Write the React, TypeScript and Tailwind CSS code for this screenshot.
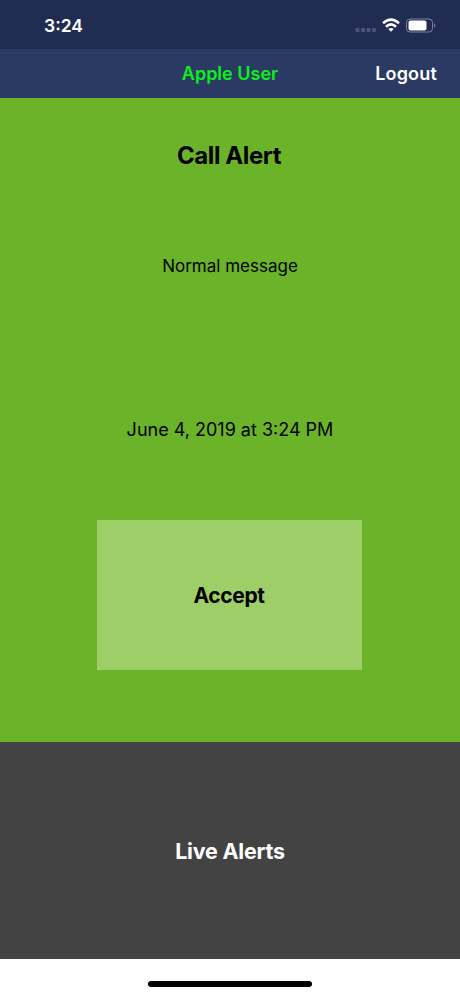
export default function App() {
  return (
    <div className="flex h-[996px] w-[460px] flex-col overflow-hidden bg-white font-['Inter',sans-serif] text-black">
      <header className="flex h-[49px] shrink-0 items-center justify-between bg-[#202c52] pl-[44px] pr-[23px] text-white">
        <time className="mt-[3px] text-[17.500px] font-semibold leading-5">3:24</time>
        <svg className="mt-[1px]" width="82" height="20" viewBox="0 0 82 20" fill="none">
          <g fill="#4c5674">
            <rect x="0.500" y="13" width="4" height="4" rx="1" />
            <rect x="6" y="13" width="4" height="4" rx="1" />
            <rect x="11.500" y="13" width="4" height="4" rx="1" />
            <rect x="17" y="13" width="4" height="4" rx="1" />
          </g>
          <g stroke="white" strokeWidth="2.600">
            <path d="M28 8.300Q36 1.100 44 8.300" />
            <path d="M31 11.700Q36 7.200 41 11.700" />
          </g>
          <path d="M33.300 14Q36 11.800 38.700 14L36 16.800Z" fill="white" />
          <rect x="51.500" y="4" width="26" height="13" rx="3.500" stroke="#7d849b" />
          <rect x="53.500" y="5.500" width="18" height="10" rx="2" fill="white" />
          <path d="M79 8Q81.500 10.500 79 13Z" fill="#7d849b" />
        </svg>
      </header>
      <nav className="grid h-[49px] shrink-0 grid-cols-3 items-center bg-[#2b3a62] text-[18px]">
        <span className="col-start-2 text-center font-semibold text-[#0cf01e]">Apple User</span>
        <button className="pr-[23px] text-right font-semibold tracking-[0.010em] text-white">Logout</button>
      </nav>
      <main className="flex h-[644px] shrink-0 flex-col items-center bg-[#6bb328]">
        <h1 className="-ml-[2px] mt-[42px] text-[24px] font-bold leading-8 tracking-[-0.017em]">Call Alert</h1>
        <p className="mt-[82px] text-[17px] leading-6">Normal message</p>
        <p className="mt-[139px] pt-px text-[18px] leading-6">June 4, 2019 at 3:24 PM</p>
        <button className="mt-[78px] h-[150px] w-[265px] -translate-x-px bg-[#9dce67] pt-[2px] text-[21px] font-bold tracking-[-0.017em]">Accept</button>
      </main>
      <section className="flex h-[217px] shrink-0 items-center justify-center bg-[#434343] pt-[2px] text-[21.500px] font-bold tracking-[-0.010em] text-white">Live Alerts</section>
      <footer className="flex h-[37px] shrink-0 justify-center bg-white pt-[22px]">
        <div className="h-[6px] w-[164px] rounded-full bg-black" />
      </footer>
    </div>
  );
}
